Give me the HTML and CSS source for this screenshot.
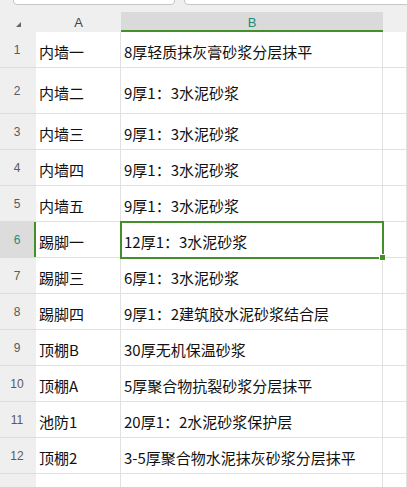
FILE: index.html
```html
<!DOCTYPE html>
<html lang="zh-CN">
<head>
  <meta charset="UTF-8">
  <title>Sheet</title>
  <link rel="stylesheet" href="styles.css">
</head>
<body>

<div class="topbar">
  <div class="box box-name"></div>
  <div class="box box-formula"></div>
</div>

<div class="sheet">
  <div class="row head">
    <div class="rh corner"><span class="tri"></span></div>
    <div class="ch">A</div>
    <div class="ch ch-active">B</div>
    <div class="ch"></div>
  </div>

  <div class="row"><div class="rh">1</div><div class="c">内墙一</div><div class="c">8厚轻质抹灰膏砂浆分层抹平</div><div class="c"></div></div>
  <div class="row tall"><div class="rh">2</div><div class="c">内墙二</div><div class="c">9厚1：3水泥砂浆</div><div class="c"></div></div>
  <div class="row"><div class="rh">3</div><div class="c">内墙三</div><div class="c">9厚1：3水泥砂浆</div><div class="c"></div></div>
  <div class="row"><div class="rh">4</div><div class="c">内墙四</div><div class="c">9厚1：3水泥砂浆</div><div class="c"></div></div>
  <div class="row"><div class="rh">5</div><div class="c">内墙五</div><div class="c">9厚1：3水泥砂浆</div><div class="c"></div></div>
  <div class="row"><div class="rh rh-active">6</div><div class="c">踢脚一</div><div class="c selected">12厚1：3水泥砂浆</div><div class="c"></div></div>
  <div class="row"><div class="rh">7</div><div class="c">踢脚三</div><div class="c">6厚1：3水泥砂浆</div><div class="c"></div></div>
  <div class="row"><div class="rh">8</div><div class="c">踢脚四</div><div class="c">9厚1：2建筑胶水泥砂浆结合层</div><div class="c"></div></div>
  <div class="row"><div class="rh">9</div><div class="c">顶棚B</div><div class="c">30厚无机保温砂浆</div><div class="c"></div></div>
  <div class="row"><div class="rh">10</div><div class="c">顶棚A</div><div class="c">5厚聚合物抗裂砂浆分层抹平</div><div class="c"></div></div>
  <div class="row"><div class="rh">11</div><div class="c">池防1</div><div class="c">20厚1：2水泥砂浆保护层</div><div class="c"></div></div>
  <div class="row"><div class="rh">12</div><div class="c">顶棚2</div><div class="c">3-5厚聚合物水泥抹灰砂浆分层抹平</div><div class="c"></div></div>
  <div class="row"><div class="rh"></div><div class="c"></div><div class="c"></div><div class="c"></div></div>
</div>

</body>
</html>
```

FILE: styles.css
```css
body {
  margin: 0;
  padding: 0;
  background-color: #efefef;
  font-family: "Noto Sans CJK SC", "Liberation Sans", sans-serif;
  color: #111;
  overflow: hidden;
}
.topbar {
  height: 12px;
  position: relative;
  background-color: #efefef;
}
.box {
  position: absolute;
  top: -6px;
  height: 9px;
  background-color: #fff;
  border: 1px solid #c6c6c6;
  border-radius: 4px;
}
.box-name {
  left: 13px;
  width: 160px;
}
.box-formula {
  left: 184px;
  width: 240px;
}
.sheet {
  background-color: #fff;
}
.row {
  display: grid;
  grid-template-columns: 36px 85px 262px 1fr;
  height: 36px;
}
.row.tall {
  height: 46px;
}
.row.head {
  height: 20px;
  background-color: #efefef;
}
.rh {
  background-color: #efefef;
  border-bottom: 1px solid #dcdcdc;
  color: #5a5a5a;
  font-family: "Liberation Sans", sans-serif;
  font-size: 12px;
  display: flex;
  align-items: center;
  justify-content: center;
  box-sizing: border-box;
  padding-right: 2px;
}
.rh-active {
  background-color: #dcdcdc;
  color: #1f8a7a;
  box-shadow: inset -2px 0 0 #43902a;
}
.corner {
  border-bottom: none;
  position: relative;
}
.tri {
  position: absolute;
  left: 16px;
  top: 10px;
  width: 0;
  height: 0;
  border-left: 5px solid transparent;
  border-bottom: 5px solid #666;
}
.ch {
  display: flex;
  align-items: center;
  justify-content: center;
  font-family: "Liberation Sans", sans-serif;
  font-size: 13px;
  color: #444;
}
.ch-active {
  background-color: #dadada;
  color: #1f8a7a;
  box-shadow: inset 0 -2px 0 #43902a;
}
.c {
  border-right: 1px solid #e1e1e1;
  border-bottom: 1px solid #e1e1e1;
  box-sizing: border-box;
  font-size: 15px;
  padding: 3px 0 0 3px;
  display: flex;
  align-items: center;
  white-space: nowrap;
  overflow: visible;
}
.c:first-of-type {
  border-left: 1px solid #e1e1e1;
}
.selected {
  position: relative;
}
.selected::after {
  content: "";
  position: absolute;
  left: -1px;
  top: -1px;
  right: -2px;
  bottom: -2px;
  border: 2px solid #43902a;
}
.selected::before {
  content: "";
  position: absolute;
  right: -4px;
  bottom: -4px;
  width: 5px;
  height: 5px;
  background-color: #43902a;
  border: 1px solid #fff;
  z-index: 2;
}
```
